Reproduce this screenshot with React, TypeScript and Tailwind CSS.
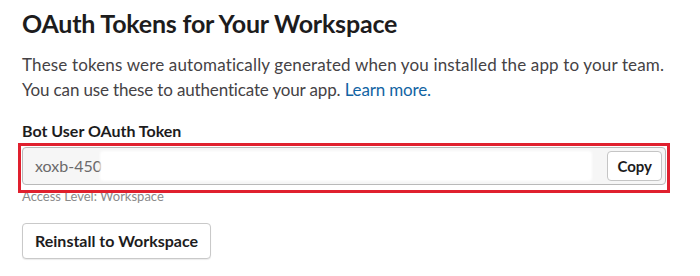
export default function App() {
  return (
    <div className="h-[276px] w-[700px] overflow-hidden bg-white pl-[22px] pt-[6px] font-['Lato','Liberation_Sans',sans-serif] text-[#1d1c1d]">
      <h1 className="text-[25px] font-bold leading-[34px] tracking-[-0.2px]">
        OAuth Tokens for Your Workspace
      </h1>

      <p className="mt-[12px] text-[17px] leading-[25px] text-[#454245]">
        <span className="tracking-[0.15px]">
          These tokens were automatically generated when you installed the app to your team.
        </span>
        <br />
        <span className="tracking-[-0.15px]">
          You can use these to authenticate your app.{" "}
          <a href="#" className="text-[#1264a3]">
            Learn more.
          </a>
        </span>
      </p>

      <div className="mt-[19px] text-[16px] font-bold leading-[20px]">Bot User OAuth Token</div>

      <div className="relative mt-[6px] w-[644px]">
        {/* token field */}
        <div className="flex h-[38px] items-center rounded-[4px] border border-[#b9b9b9] bg-[#f6f6f6] pl-[12px] pr-[3px]">
          <span className="text-[16px] text-[#6b6a6b]">xoxb-450</span>
          <div className="flex-1" />
          <button className="h-[30px] rounded-[4px] border border-[#c5c5c5] bg-white px-[9px] text-[15px] font-bold text-[#1d1c1d]">
            Copy
          </button>
        </div>
        {/* redaction */}
        <div className="absolute left-[78px] top-[4px] h-[30px] w-[492px] rounded-[3px] bg-white blur-[1px]" />
        {/* highlight */}
        <div className="pointer-events-none absolute -left-[4px] -top-[4px] z-10 h-[50px] w-[652px] border-[3px] border-[#e0202e]" />
      </div>

      <div className="mt-[3px] text-[13px] leading-[16px] text-[#8a8a8a]">Access Level: Workspace</div>

      <button className="mt-[19px] h-[36px] rounded-[4px] border border-[#c9c9c9] bg-white px-[12px] text-[16px] font-bold text-[#1d1c1d] shadow-[0_1px_1px_rgba(0,0,0,0.08)]">
        Reinstall to Workspace
      </button>
    </div>
  );
}
